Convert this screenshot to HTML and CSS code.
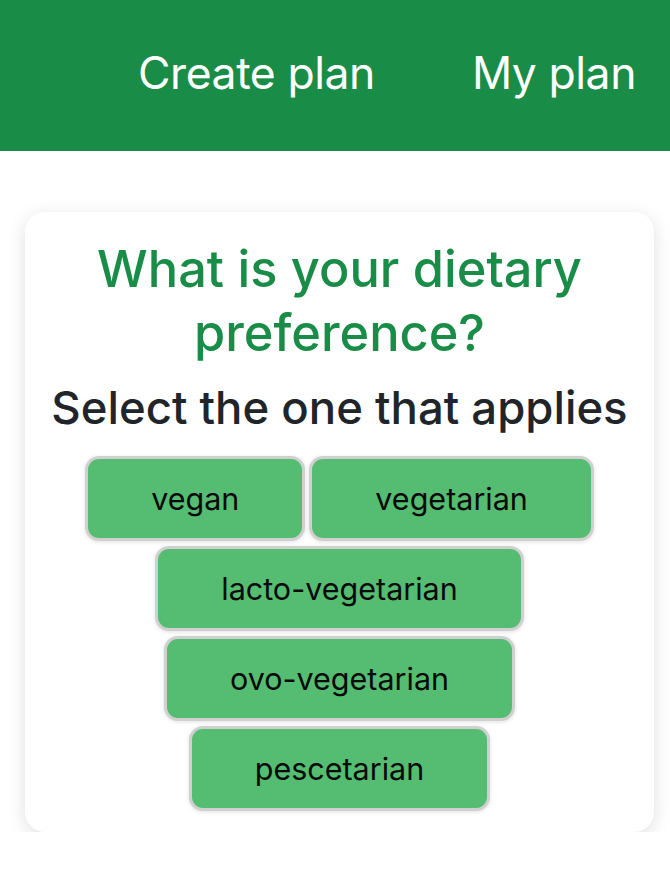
FILE: index.html
```html
<!DOCTYPE html>
<html lang="en">
<head>
<meta charset="utf-8">
<title>Create plan</title>
<link rel="stylesheet" href="styles.css">
</head>
<body>
<header class="topbar">
  <nav class="nav">
    <a class="nav-link" href="#">Create plan</a>
    <a class="nav-link" href="#">My plan</a>
  </nav>
</header>
<main class="card">
  <h1 class="question">What is your dietary preference?</h1>
  <h2 class="hint">Select the one that applies</h2>
  <div class="options">
    <button class="option">vegan</button>
    <button class="option">vegetarian</button>
    <button class="option">lacto-vegetarian</button>
    <button class="option">ovo-vegetarian</button>
    <button class="option">pescetarian</button>
  </div>
</main>
</body>
</html>
```
FILE: styles.css
```css
* { box-sizing: border-box; }
body {
  margin: 0;
  background: #ffffff;
  font-family: Inter, "Noto Sans", sans-serif;
}
.topbar {
  height: 151px;
  background: #198c47;
  display: flex;
  align-items: center;
  justify-content: flex-end;
  padding: 0 34px 6px 0;
}
.nav {
  display: flex;
  gap: 97px;
}
.nav-link {
  color: #ffffff;
  text-decoration: none;
  font-size: 44.5px;
  font-weight: 400;
  letter-spacing: -0.45px;
}
.card {
  margin: 61px 16px 0 25px;
  background: #ffffff;
  border-radius: 20px;
  box-shadow: 0 4px 18px rgba(0, 0, 0, 0.13);
  padding: 25px 10px 21px;
  text-align: center;
}
.question {
  margin: 0;
  color: #198c47;
  font-size: 50.5px;
  font-weight: 500;
  line-height: 64px;
}
.hint {
  margin: 13px 0 18px;
  color: #212529;
  font-size: 45.5px;
  font-weight: 500;
  line-height: 60px;
}
.options {
  display: flex;
  flex-wrap: wrap;
  justify-content: center;
  gap: 5px 4px;
}
.option {
  font-family: Inter, "Noto Sans", sans-serif;
  font-size: 30.5px;
  color: #0a0a0a;
  background: #55bd72;
  border: 3px solid #d0d0d0;
  border-radius: 14px;
  padding: 0 63px;
  height: 85px;
  box-shadow: 0 1px 4px rgba(0, 0, 0, 0.12);
}
```
